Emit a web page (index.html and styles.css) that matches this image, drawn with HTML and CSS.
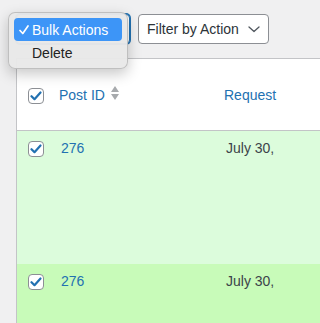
FILE: index.html
```html
<!DOCTYPE html>
<html>
<head>
<meta charset="utf-8">
<link rel="stylesheet" href="styles.css">
</head>
<body>
<div class="page">
  <div class="tablenav">
    <div class="select select-bulk" aria-label="Bulk Actions"></div>
    <div class="select select-filter">
      <span>Filter by Action</span>
      <svg class="chevron" width="12" height="7" viewBox="0 0 12 7"><path d="M1 1 L6 5.5 L11 1" fill="none" stroke="#50575e" stroke-width="1.3" stroke-linecap="round" stroke-linejoin="round"/></svg>
    </div>
  </div>

  <div class="table">
    <div class="row head">
      <div class="cell cb"><span class="checkbox"><svg width="12" height="10" viewBox="0 0 12 10"><path d="M1.5 5.2 L4.5 8.2 L10.5 1.5" fill="none" stroke="#2271b1" stroke-width="2.2" stroke-linecap="round" stroke-linejoin="round"/></svg></span></div>
      <div class="cell id"><a class="link">Post ID</a><svg class="sort" width="8" height="14" viewBox="0 0 8 14"><path d="M4 0 L8 6 L0 6 Z M0 8 L8 8 L4 14 Z" fill="#a7aaad"/></svg></div>
      <div class="cell req"><a class="link">Request</a></div>
    </div>
    <div class="row body r1">
      <div class="cell cb"><span class="checkbox"><svg width="12" height="10" viewBox="0 0 12 10"><path d="M1.5 5.2 L4.5 8.2 L10.5 1.5" fill="none" stroke="#2271b1" stroke-width="2.2" stroke-linecap="round" stroke-linejoin="round"/></svg></span></div>
      <div class="cell id"><a class="link">276</a></div>
      <div class="cell req">July 30,</div>
    </div>
    <div class="row body r2">
      <div class="cell cb"><span class="checkbox"><svg width="12" height="10" viewBox="0 0 12 10"><path d="M1.5 5.2 L4.5 8.2 L10.5 1.5" fill="none" stroke="#2271b1" stroke-width="2.2" stroke-linecap="round" stroke-linejoin="round"/></svg></span></div>
      <div class="cell id"><a class="link">276</a></div>
      <div class="cell req">July 30,</div>
    </div>
  </div>
</div>

<div class="menu">
  <div class="menu-item selected"><svg class="tick" width="10" height="10" viewBox="0 0 10 10"><path d="M1 5.5 L3.8 8.5 L9 1" fill="none" stroke="#fff" stroke-width="1.7" stroke-linecap="round" stroke-linejoin="round"/></svg><span>Bulk Actions</span></div>
  <div class="menu-item"><span>Delete</span></div>
</div>
</body>
</html>
```

FILE: styles.css
```css
html, body {
  margin: 0;
  padding: 0;
  overflow: hidden;
}
body {
  background: #f0f0f1;
  font-family: "Liberation Sans", Arial, sans-serif;
  font-size: 14px;
  color: #3c434a;
  height: 323px;
  position: relative;
}
.page {
  box-sizing: border-box;
  height: 323px;
  overflow: hidden;
  padding: 14px 0 0 16px;
}
.tablenav {
  display: flex;
  gap: 8px;
  height: 30px;
  margin-bottom: 14px;
}
.select {
  box-sizing: border-box;
  height: 30px;
  border: 1px solid #8c8f94;
  border-radius: 4px;
  background: #fff;
  color: #2c3338;
  display: flex;
  align-items: center;
  padding: 0 8px;
  white-space: nowrap;
  flex-shrink: 0;
}
.select-bulk {
  width: 114px;
  border-color: #2271b1;
  box-shadow: 0 0 0 1px #2271b1;
}
.select-filter {
  width: 131px;
  justify-content: space-between;
}
.table {
  width: 600px;
  background: #fff;
  border-top: 1px solid #c3c4c7;
  border-left: 1px solid #c3c4c7;
}
.row {
  display: grid;
  grid-template-columns: 34px 165px 1fr;
}
.row.head {
  height: 71px;
  border-bottom: 1px solid #c3c4c7;
}
.row.body {
  height: 133px;
}
.r1 { background: #dcfcdc; }
.r2 { background: #c8fbb9; }
.cell {
  line-height: 20px;
  white-space: nowrap;
  display: flex;
  align-items: flex-start;
}
.head .cell {
  padding: 26px 8px 0;
}
.body .cell {
  padding: 7px 10px 0;
}
.row .cell.cb {
  padding-left: 11px;
  padding-right: 0;
}
.checkbox {
  box-sizing: border-box;
  width: 16px;
  height: 16px;
  margin-top: 3px;
  border: 1px solid #8c8f94;
  border-radius: 4px;
  background: #fff;
  display: flex;
  align-items: center;
  justify-content: center;
}
.link {
  color: #2271b1;
  text-decoration: none;
}
.sort {
  margin-left: 6px;
  margin-top: 1px;
}
.menu {
  position: absolute;
  left: 8px;
  top: 12px;
  width: 120px;
  height: 57px;
  box-sizing: border-box;
  padding: 5px;
  background: rgba(232, 232, 232, 0.97);
  border: 1px solid rgba(0, 0, 0, 0.18);
  border-radius: 7px;
  box-shadow: 0 5px 14px rgba(0, 0, 0, 0.22);
}
.menu-item {
  height: 23px;
  display: flex;
  align-items: center;
  padding-left: 18px;
  color: #222;
  border-radius: 4px;
  white-space: nowrap;
}
.menu-item.selected {
  background: #3d95f7;
  color: #fff;
  padding-left: 5px;
}
.tick {
  width: 10px;
  margin-right: 3px;
}
```
